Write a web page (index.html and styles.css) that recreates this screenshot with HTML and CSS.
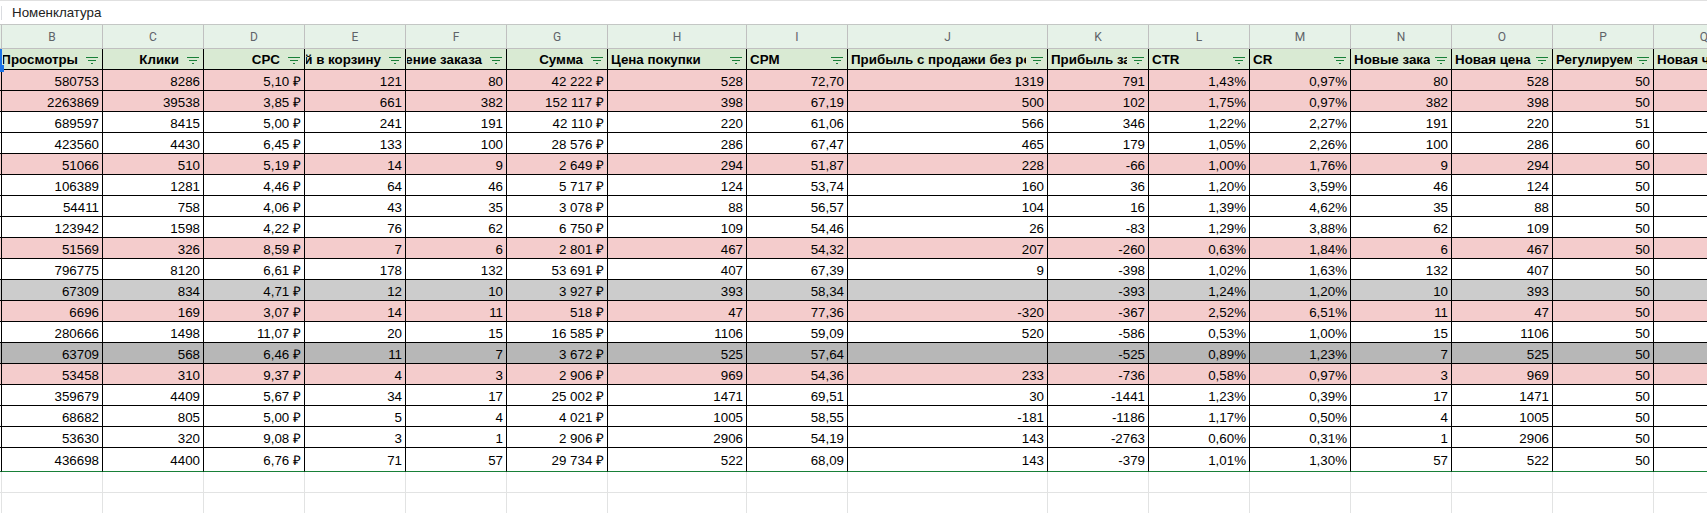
FILE: index.html
```html
<!DOCTYPE html>
<html lang="ru">
<head>
<meta charset="utf-8">
<title>Номенклатура</title>
<link rel="stylesheet" href="styles.css">
</head>
<body>
<div class="formula-bar"><span class="formula-sep"></span><span class="formula-text">Номенклатура</span></div>
<svg width="0" height="0" class="defs"><symbol id="f" viewBox="0 0 12 7"><path d="M0 .5h12M2 3.500h8M5 6.500h2" fill="none" stroke="#188038" stroke-width="1"/></symbol></svg>
<div class="sheet">
<span class="sel-bar"></span><span class="sel-handle"></span>
<table class="grid">
<colgroup><col class="ca"><col class="cw"><col class="cw"><col class="cw"><col class="cw"><col class="cw"><col class="cw"><col class="ch"><col class="cw"><col class="cj"><col class="cw"><col class="cw"><col class="cw"><col class="cw"><col class="cw"><col class="cw"><col class="cw"></colgroup>
<thead>
<tr class="letters"><th></th><th>B</th><th>C</th><th>D</th><th>E</th><th>F</th><th>G</th><th>H</th><th>I</th><th>J</th><th>K</th><th>L</th><th>M</th><th>N</th><th>O</th><th>P</th><th>Q</th></tr>
<tr class="heads">
<th></th>
<th><div class="hc"><span class="lbl end"><span>Просмотры</span></span><svg class="fi"><use href="#f"/></svg></div></th>
<th><div class="hc"><span class="lbl end"><span>Клики</span></span><svg class="fi"><use href="#f"/></svg></div></th>
<th><div class="hc"><span class="lbl end"><span>CPC</span></span><svg class="fi"><use href="#f"/></svg></div></th>
<th><div class="hc"><span class="lbl end"><span>Добавлений в корзину</span></span><svg class="fi"><use href="#f"/></svg></div></th>
<th><div class="hc"><span class="lbl end"><span>Оформление заказа</span></span><svg class="fi"><use href="#f"/></svg></div></th>
<th><div class="hc"><span class="lbl end"><span>Сумма</span></span><svg class="fi"><use href="#f"/></svg></div></th>
<th><div class="hc"><span class="lbl"><span>Цена покупки</span></span><svg class="fi"><use href="#f"/></svg></div></th>
<th><div class="hc"><span class="lbl"><span>CPM</span></span><svg class="fi"><use href="#f"/></svg></div></th>
<th><div class="hc"><span class="lbl"><span>Прибыль с продажи без рекламы</span></span><svg class="fi"><use href="#f"/></svg></div></th>
<th><div class="hc"><span class="lbl"><span>Прибыль за заказ</span></span><svg class="fi"><use href="#f"/></svg></div></th>
<th><div class="hc"><span class="lbl"><span>CTR</span></span><svg class="fi"><use href="#f"/></svg></div></th>
<th><div class="hc"><span class="lbl"><span>CR</span></span><svg class="fi"><use href="#f"/></svg></div></th>
<th><div class="hc"><span class="lbl"><span>Новые заказы</span></span><svg class="fi"><use href="#f"/></svg></div></th>
<th><div class="hc"><span class="lbl"><span>Новая цена</span></span><svg class="fi"><use href="#f"/></svg></div></th>
<th><div class="hc"><span class="lbl"><span>Регулируемая цена</span></span><svg class="fi"><use href="#f"/></svg></div></th>
<th><div class="hc"><span class="lbl"><span>Новая чистая прибыль</span></span><svg class="fi"><use href="#f"/></svg></div></th>
</tr>
</thead>
<tbody>
<tr class="red"><td></td><td>580753</td><td>8286</td><td>5,10 ₽</td><td>121</td><td>80</td><td>42 222 ₽</td><td>528</td><td>72,70</td><td>1319</td><td>791</td><td>1,43%</td><td>0,97%</td><td>80</td><td>528</td><td>50</td><td></td></tr>
<tr class="red"><td></td><td>2263869</td><td>39538</td><td>3,85 ₽</td><td>661</td><td>382</td><td>152 117 ₽</td><td>398</td><td>67,19</td><td>500</td><td>102</td><td>1,75%</td><td>0,97%</td><td>382</td><td>398</td><td>50</td><td></td></tr>
<tr><td></td><td>689597</td><td>8415</td><td>5,00 ₽</td><td>241</td><td>191</td><td>42 110 ₽</td><td>220</td><td>61,06</td><td>566</td><td>346</td><td>1,22%</td><td>2,27%</td><td>191</td><td>220</td><td>51</td><td></td></tr>
<tr><td></td><td>423560</td><td>4430</td><td>6,45 ₽</td><td>133</td><td>100</td><td>28 576 ₽</td><td>286</td><td>67,47</td><td>465</td><td>179</td><td>1,05%</td><td>2,26%</td><td>100</td><td>286</td><td>60</td><td></td></tr>
<tr class="red"><td></td><td>51066</td><td>510</td><td>5,19 ₽</td><td>14</td><td>9</td><td>2 649 ₽</td><td>294</td><td>51,87</td><td>228</td><td>-66</td><td>1,00%</td><td>1,76%</td><td>9</td><td>294</td><td>50</td><td></td></tr>
<tr><td></td><td>106389</td><td>1281</td><td>4,46 ₽</td><td>64</td><td>46</td><td>5 717 ₽</td><td>124</td><td>53,74</td><td>160</td><td>36</td><td>1,20%</td><td>3,59%</td><td>46</td><td>124</td><td>50</td><td></td></tr>
<tr><td></td><td>54411</td><td>758</td><td>4,06 ₽</td><td>43</td><td>35</td><td>3 078 ₽</td><td>88</td><td>56,57</td><td>104</td><td>16</td><td>1,39%</td><td>4,62%</td><td>35</td><td>88</td><td>50</td><td></td></tr>
<tr><td></td><td>123942</td><td>1598</td><td>4,22 ₽</td><td>76</td><td>62</td><td>6 750 ₽</td><td>109</td><td>54,46</td><td>26</td><td>-83</td><td>1,29%</td><td>3,88%</td><td>62</td><td>109</td><td>50</td><td></td></tr>
<tr class="red"><td></td><td>51569</td><td>326</td><td>8,59 ₽</td><td>7</td><td>6</td><td>2 801 ₽</td><td>467</td><td>54,32</td><td>207</td><td>-260</td><td>0,63%</td><td>1,84%</td><td>6</td><td>467</td><td>50</td><td></td></tr>
<tr><td></td><td>796775</td><td>8120</td><td>6,61 ₽</td><td>178</td><td>132</td><td>53 691 ₽</td><td>407</td><td>67,39</td><td>9</td><td>-398</td><td>1,02%</td><td>1,63%</td><td>132</td><td>407</td><td>50</td><td></td></tr>
<tr class="grey"><td></td><td>67309</td><td>834</td><td>4,71 ₽</td><td>12</td><td>10</td><td>3 927 ₽</td><td>393</td><td>58,34</td><td></td><td>-393</td><td>1,24%</td><td>1,20%</td><td>10</td><td>393</td><td>50</td><td></td></tr>
<tr class="red"><td></td><td>6696</td><td>169</td><td>3,07 ₽</td><td>14</td><td>11</td><td>518 ₽</td><td>47</td><td>77,36</td><td>-320</td><td>-367</td><td>2,52%</td><td>6,51%</td><td>11</td><td>47</td><td>50</td><td></td></tr>
<tr><td></td><td>280666</td><td>1498</td><td>11,07 ₽</td><td>20</td><td>15</td><td>16 585 ₽</td><td>1106</td><td>59,09</td><td>520</td><td>-586</td><td>0,53%</td><td>1,00%</td><td>15</td><td>1106</td><td>50</td><td></td></tr>
<tr class="dark"><td></td><td>63709</td><td>568</td><td>6,46 ₽</td><td>11</td><td>7</td><td>3 672 ₽</td><td>525</td><td>57,64</td><td></td><td>-525</td><td>0,89%</td><td>1,23%</td><td>7</td><td>525</td><td>50</td><td></td></tr>
<tr class="red"><td></td><td>53458</td><td>310</td><td>9,37 ₽</td><td>4</td><td>3</td><td>2 906 ₽</td><td>969</td><td>54,36</td><td>233</td><td>-736</td><td>0,58%</td><td>0,97%</td><td>3</td><td>969</td><td>50</td><td></td></tr>
<tr><td></td><td>359679</td><td>4409</td><td>5,67 ₽</td><td>34</td><td>17</td><td>25 002 ₽</td><td>1471</td><td>69,51</td><td>30</td><td>-1441</td><td>1,23%</td><td>0,39%</td><td>17</td><td>1471</td><td>50</td><td></td></tr>
<tr><td></td><td>68682</td><td>805</td><td>5,00 ₽</td><td>5</td><td>4</td><td>4 021 ₽</td><td>1005</td><td>58,55</td><td>-181</td><td>-1186</td><td>1,17%</td><td>0,50%</td><td>4</td><td>1005</td><td>50</td><td></td></tr>
<tr><td></td><td>53630</td><td>320</td><td>9,08 ₽</td><td>3</td><td>1</td><td>2 906 ₽</td><td>2906</td><td>54,19</td><td>143</td><td>-2763</td><td>0,60%</td><td>0,31%</td><td>1</td><td>2906</td><td>50</td><td></td></tr>
<tr class="last"><td></td><td>436698</td><td>4400</td><td>6,76 ₽</td><td>71</td><td>57</td><td>29 734 ₽</td><td>522</td><td>68,09</td><td>143</td><td>-379</td><td>1,01%</td><td>1,30%</td><td>57</td><td>522</td><td>50</td><td></td></tr>
<tr class="empty"><td></td><td></td><td></td><td></td><td></td><td></td><td></td><td></td><td></td><td></td><td></td><td></td><td></td><td></td><td></td><td></td><td></td></tr>
<tr class="empty"><td></td><td></td><td></td><td></td><td></td><td></td><td></td><td></td><td></td><td></td><td></td><td></td><td></td><td></td><td></td><td></td><td></td></tr>
</tbody>
</table>
</div>
</body>
</html>
```
FILE: styles.css
```css
html, body { margin: 0; padding: 0; background: #fff; }
body { width: 1707px; height: 513px; overflow: hidden; font-family: "Liberation Sans", Arial, sans-serif; color: #000; }
.defs { position: absolute; }

.formula-bar { box-sizing: border-box; height: 25px; display: flex; align-items: center; border-top: 1px solid #e0e0e0; border-bottom: 1px solid #c4c7c5; background: #fff; }
.formula-sep { width: 1px; height: 14px; margin-left: 1px; background: #dadce0; }
.formula-text { margin-left: 10px; font-size: 13.33px; color: #222; }

.sheet { position: relative; }
.sel-bar { position: absolute; left: 0; top: 24px; width: 2px; height: 16px; background: #1a73e8; }
.sel-handle { position: absolute; left: 0; top: 40px; width: 4px; height: 7px; background: #1a73e8; }

.grid { table-layout: fixed; border-collapse: separate; border-spacing: 0; width: 1755px; font-size: 13.33px; }
.ca { width: 2px; }
.cw { width: 101px; }
.ch { width: 139px; }
.cj { width: 200px; }

.grid th, .grid td { box-sizing: border-box; padding: 0; overflow: hidden; white-space: nowrap; }

.letters th { height: 24px; background: #e6f2e8; border-right: 1px solid #c0c0c0; border-bottom: 1px solid #c0c0c0; font-family: Roboto, "Liberation Sans", sans-serif; font-size: 12px; font-weight: 400; color: #5f6368; text-align: center; }

.heads th { height: 21px; background: #d9ead3; border-right: 1px solid #000; border-bottom: 1px solid #000; font-weight: 700; vertical-align: middle; }
.hc { display: flex; align-items: center; padding: 0 3px; height: 20px; }
.lbl { flex: 1; min-width: 0; display: flex; overflow: hidden; }
.lbl span { flex-shrink: 0; }
.lbl.end { justify-content: flex-end; margin-left: -2px; padding-right: 3px; }
.fi { flex: none; width: 12px; height: 7px; margin: 2px 1px 0 5px; }

.grid td { height: 21px; padding: 0 3px 1px; border-right: 1px solid #000; border-bottom: 1px solid #000; text-align: right; vertical-align: bottom; line-height: 15px; }
.grid td:first-child { padding: 0; }
.red td { background: #f4cccc; }
.grey td { background: #cccccc; }
.dark td { background: #b7b7b7; }
.last td { height: 24px; padding-bottom: 3px; border-bottom: 1px solid #188038; }
.empty td { height: 21px; padding: 0; border-right: 1px solid #e2e3e3; border-bottom: 1px solid #e2e3e3; }
```
